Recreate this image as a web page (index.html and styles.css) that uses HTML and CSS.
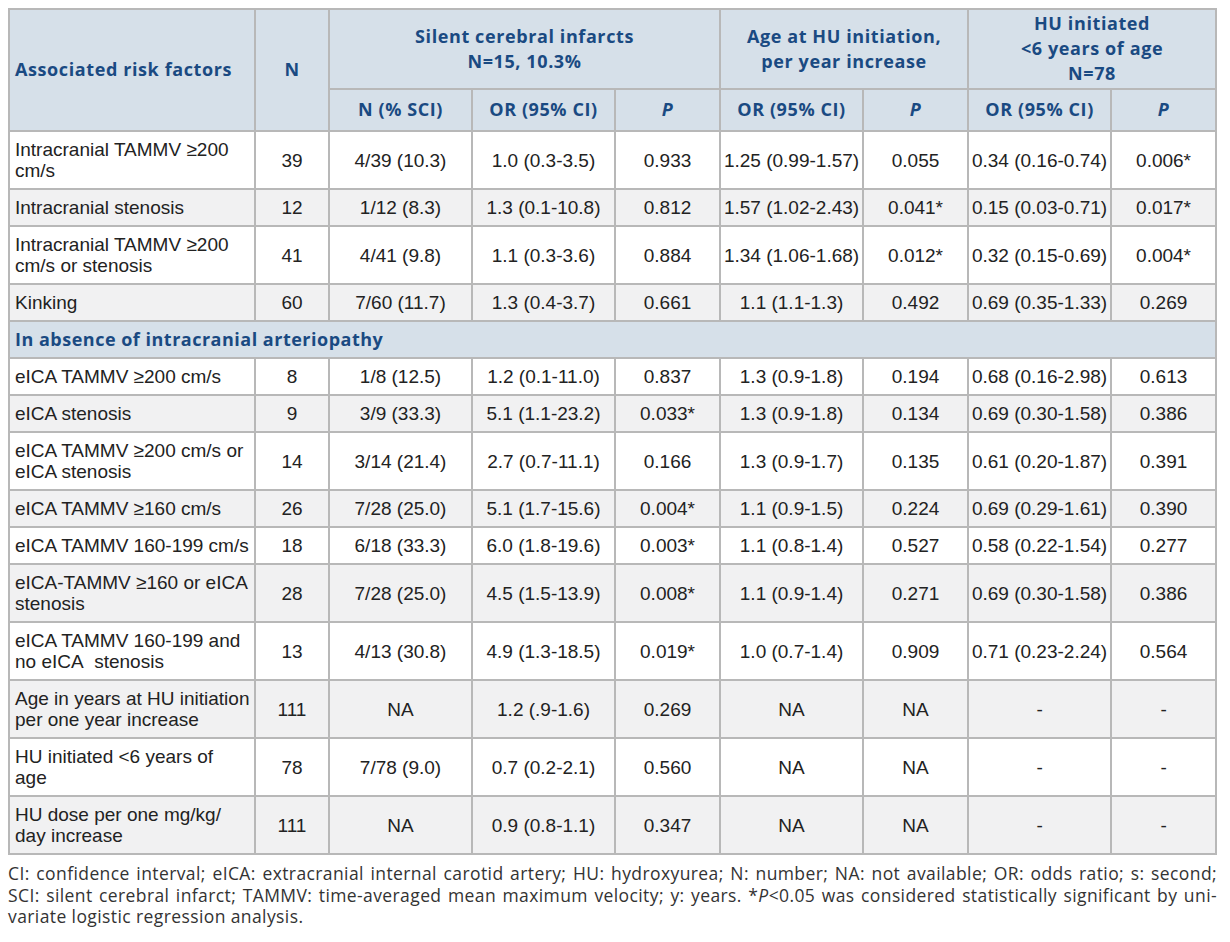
FILE: index.html
```html
<!DOCTYPE html>
<html>
<head>
<meta charset="utf-8">
<link rel="stylesheet" href="styles.css">
</head>
<body>
<div class="wrap">
<table class="tbl">
  <colgroup>
    <col class="c-label"><col class="c-n"><col class="c-w"><col class="c-w"><col class="c-p"><col class="c-w"><col class="c-p"><col class="c-w"><col class="c-p">
  </colgroup>
  <thead>
    <tr class="h1">
      <th rowspan="2" class="left">Associated risk factors</th>
      <th rowspan="2">N</th>
      <th colspan="3">Silent cerebral infarcts<br>N=15, 10.3%</th>
      <th colspan="2">Age at HU initiation,<br>per year increase</th>
      <th colspan="2">HU initiated<br>&lt;6 years of age<br>N=78</th>
    </tr>
    <tr class="h2">
      <th>N (% SCI)</th>
      <th>OR (95% CI)</th>
      <th><i>P</i></th>
      <th>OR (95% CI)</th>
      <th><i>P</i></th>
      <th>OR (95% CI)</th>
      <th><i>P</i></th>
    </tr>
  </thead>
  <tbody>
    <tr><td class="left">Intracranial TAMMV ≥200 cm/s</td><td>39</td><td>4/39 (10.3)</td><td>1.0 (0.3-3.5)</td><td>0.933</td><td>1.25 (0.99-1.57)</td><td>0.055</td><td>0.34 (0.16-0.74)</td><td>0.006*</td></tr>
    <tr class="alt"><td class="left">Intracranial stenosis</td><td>12</td><td>1/12 (8.3)</td><td>1.3 (0.1-10.8)</td><td>0.812</td><td>1.57 (1.02-2.43)</td><td>0.041*</td><td>0.15 (0.03-0.71)</td><td>0.017*</td></tr>
    <tr><td class="left">Intracranial TAMMV ≥200 cm/s or stenosis</td><td>41</td><td>4/41 (9.8)</td><td>1.1 (0.3-3.6)</td><td>0.884</td><td>1.34 (1.06-1.68)</td><td>0.012*</td><td>0.32 (0.15-0.69)</td><td>0.004*</td></tr>
    <tr class="alt"><td class="left">Kinking</td><td>60</td><td>7/60 (11.7)</td><td>1.3 (0.4-3.7)</td><td>0.661</td><td>1.1 (1.1-1.3)</td><td>0.492</td><td>0.69 (0.35-1.33)</td><td>0.269</td></tr>
    <tr class="sec"><td colspan="9" class="left">In absence of intracranial arteriopathy</td></tr>
    <tr><td class="left">eICA TAMMV ≥200 cm/s</td><td>8</td><td>1/8 (12.5)</td><td>1.2 (0.1-11.0)</td><td>0.837</td><td>1.3 (0.9-1.8)</td><td>0.194</td><td>0.68 (0.16-2.98)</td><td>0.613</td></tr>
    <tr class="alt"><td class="left">eICA stenosis</td><td>9</td><td>3/9 (33.3)</td><td>5.1 (1.1-23.2)</td><td>0.033*</td><td>1.3 (0.9-1.8)</td><td>0.134</td><td>0.69 (0.30-1.58)</td><td>0.386</td></tr>
    <tr><td class="left">eICA TAMMV ≥200 cm/s or eICA stenosis</td><td>14</td><td>3/14 (21.4)</td><td>2.7 (0.7-11.1)</td><td>0.166</td><td>1.3 (0.9-1.7)</td><td>0.135</td><td>0.61 (0.20-1.87)</td><td>0.391</td></tr>
    <tr class="alt"><td class="left">eICA TAMMV ≥160 cm/s</td><td>26</td><td>7/28 (25.0)</td><td>5.1 (1.7-15.6)</td><td>0.004*</td><td>1.1 (0.9-1.5)</td><td>0.224</td><td>0.69 (0.29-1.61)</td><td>0.390</td></tr>
    <tr><td class="left">eICA TAMMV 160-199 cm/s</td><td>18</td><td>6/18 (33.3)</td><td>6.0 (1.8-19.6)</td><td>0.003*</td><td>1.1 (0.8-1.4)</td><td>0.527</td><td>0.58 (0.22-1.54)</td><td>0.277</td></tr>
    <tr class="alt"><td class="left">eICA-TAMMV ≥160 or eICA stenosis</td><td>28</td><td>7/28 (25.0)</td><td>4.5 (1.5-13.9)</td><td>0.008*</td><td>1.1 (0.9-1.4)</td><td>0.271</td><td>0.69 (0.30-1.58)</td><td>0.386</td></tr>
    <tr><td class="left">eICA TAMMV 160-199 and no eICA&nbsp; stenosis</td><td>13</td><td>4/13 (30.8)</td><td>4.9 (1.3-18.5)</td><td>0.019*</td><td>1.0 (0.7-1.4)</td><td>0.909</td><td>0.71 (0.23-2.24)</td><td>0.564</td></tr>
    <tr class="alt"><td class="left">Age in years at HU initiation per one year increase</td><td>111</td><td>NA</td><td>1.2 (.9-1.6)</td><td>0.269</td><td>NA</td><td>NA</td><td>-</td><td>-</td></tr>
    <tr><td class="left">HU initiated &lt;6 years of<br>age</td><td>78</td><td>7/78 (9.0)</td><td>0.7 (0.2-2.1)</td><td>0.560</td><td>NA</td><td>NA</td><td>-</td><td>-</td></tr>
    <tr class="alt"><td class="left">HU dose per one mg/kg/ day increase</td><td>111</td><td>NA</td><td>0.9 (0.8-1.1)</td><td>0.347</td><td>NA</td><td>NA</td><td>-</td><td>-</td></tr>
  </tbody>
</table>
<p class="note">CI: confidence interval; eICA: extracranial internal carotid artery; HU: hydroxyurea; N: number; NA: not available; OR: odds ratio; s: second; SCI: silent cerebral infarct; TAMMV: time-averaged mean maximum velocity; y: years. *<i>P</i>&lt;0.05 was considered statistically significant by uni-variate logistic regression analysis.</p>
</div>
</body>
</html>
```

FILE: styles.css
```css
html, body {
  margin: 0;
  padding: 0;
  background: #ffffff;
}
.wrap {
  padding: 8px 13px 0 8px;
}
.tbl {
  width: 1209px;
  border-collapse: collapse;
  table-layout: fixed;
  font-family: "Liberation Sans", Arial, sans-serif;
  font-size: 19px;
  color: #222222;
}
.c-label { width: 246px; }
.c-n { width: 74px; }
.c-w { width: 143px; }
.c-p { width: 105px; }
.tbl th, .tbl td {
  border: 2px solid #b8b8b8;
  text-align: center;
  vertical-align: middle;
  padding: 7px 1px;
  line-height: 21px;
  white-space: nowrap;
}
.tbl th {
  background: #d6e0e9;
  color: #1a4a82;
  font-family: "Open Sans", "Liberation Sans", sans-serif;
  font-weight: 700;
  font-size: 18px;
  letter-spacing: 0.6px;
}
.h1 th {
  line-height: 25px;
  padding: 1px 1px 2px;
}
.h2 th {
  padding: 9px 1px 10px;
}
.tbl .left {
  text-align: left;
  padding-left: 5px;
  padding-right: 2px;
  white-space: normal;
}
.tbl tr.alt td {
  background: #f1f1f2;
}
.tbl tr.sec td {
  background: #d6e0e9;
  color: #1a4a82;
  font-family: "Open Sans", "Liberation Sans", sans-serif;
  font-weight: 700;
  font-size: 18px;
  letter-spacing: 0.5px;
}
.note {
  margin: 8px 0 0 0;
  width: 1209px;
  font-family: "Open Sans", "Liberation Sans", sans-serif;
  font-size: 17.5px;
  line-height: 21.5px;
  letter-spacing: 0.4px;
  color: #333333;
  text-align: justify;
}
```
